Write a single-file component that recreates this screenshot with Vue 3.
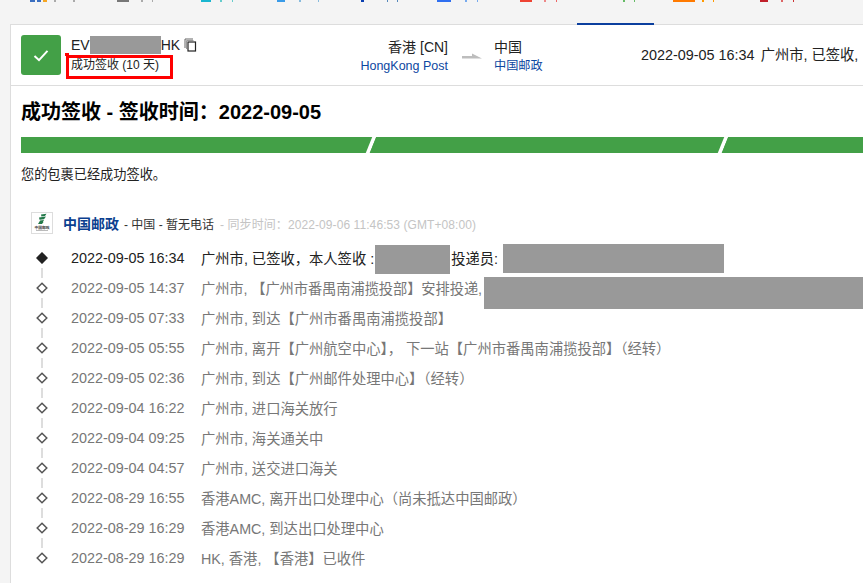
<script setup>
const marks = [
  [30,5,'#3b6fc0'],[37,4,'#3b6fc0'],[43,4,'#f5a623'],[54,2,'#aaa'],[73,2,'#aaa'],[117,12,'#777'],[141,2,'#aaa'],[152,1,'#aaa'],
  [201,10,'#1ab6d0'],[220,2,'#6cc'],[232,1,'#6cc'],[277,8,'#3a9be8'],[299,2,'#8bd'],[318,1,'#8bd'],[361,3,'#0a3fb0'],[387,1,'#58b'],[397,1,'#58b'],
  [437,14,'#2f6ff0'],[465,2,'#7ae'],[477,1,'#7ae'],[520,12,'#ee4433'],[544,2,'#e88'],[556,1,'#e66'],[623,2,'#6b6'],[634,1,'#6b6'],
  [673,22,'#ff7a00'],[702,2,'#f90'],[713,1,'#f90'],[760,8,'#c0202a'],[781,2,'#d66'],[793,1,'#c33']
]
let cursor = 0
const strip = marks.map(([x, w, c]) => {
  const m = { gap: x - cursor, w, c }
  cursor = x + w
  return m
})
const events = [
  ['2022-09-05 14:37', '广州市, 【广州市番禺南浦揽投部】安排投递,', 'long'],
  ['2022-09-05 07:33', '广州市, 到达【广州市番禺南浦揽投部】'],
  ['2022-09-05 05:55', '广州市, 离开【广州航空中心】， 下一站【广州市番禺南浦揽投部】（经转）'],
  ['2022-09-05 02:36', '广州市, 到达【广州邮件处理中心】（经转）'],
  ['2022-09-04 16:22', '广州市, 进口海关放行'],
  ['2022-09-04 09:25', '广州市, 海关通关中'],
  ['2022-09-04 04:57', '广州市, 送交进口海关'],
  ['2022-08-29 16:55', '香港AMC, 离开出口处理中心（尚未抵达中国邮政）'],
  ['2022-08-29 16:29', '香港AMC, 到达出口处理中心'],
  ['2022-08-29 16:29', 'HK, 香港, 【香港】已收件']
]
</script>

<template>
  <div class="page">
    <div class="strip">
      <i v-for="(m, i) in strip" :key="i" class="mark" :style="{ marginLeft: m.gap + 'px', width: m.w + 'px', background: m.c }"></i>
      <b class="active-tab"></b>
    </div>
    <div class="card">
      <header class="head">
        <div class="ok">
          <svg width="16" height="13" viewBox="0 0 16 13"><path d="M1.5 7 L6 11.2 L14.5 1.8" fill="none" stroke="#fff" stroke-width="2"/></svg>
        </div>
        <div class="num">
          <div class="num-line">EV<span class="redact r-num"></span>HK
            <svg class="copy" width="13" height="14" viewBox="0 0 13 14"><path d="M1 10V1h8" fill="none" stroke="#666" stroke-width="1"/><path d="M2.500 11V2.500h7" fill="none" stroke="#999" stroke-width="1"/><rect x="4" y="4" width="7.500" height="9" fill="#fff" stroke="#222" stroke-width="1.200"/></svg>
          </div>
          <div class="num-sub">成功签收 (10 天)<span class="tick"></span></div>
        </div>
        <div class="from">
          <div class="place">香港 [CN]</div>
          <div class="post">HongKong Post</div>
        </div>
        <svg class="arrow" width="20" height="8" viewBox="0 0 20 8"><path d="M0 4h10V1.500L20 6.500H0z" fill="#bdbdbd"/></svg>
        <div class="to">
          <div class="place">中国</div>
          <div class="post">中国邮政</div>
        </div>
        <div class="latest"><span>2022-09-05 16:34</span><span class="latest-desc">广州市, 已签收,</span></div>
      </header>

      <section class="body">
        <h1 class="title">成功签收 - 签收时间：2022-09-05</h1>
        <div class="bar">
          <span class="seg"></span><span class="seg"></span><span class="seg"></span>
        </div>
        <p class="msg">您的包裹已经成功签收。</p>

        <div class="carrier">
          <div class="logo">
            <svg width="20" height="20" viewBox="0 0 20 20">
              <path d="M9 1.500l5.500-.8-1.500 2.300-3.600.5zM7 4.500l7-1-2 2.800-4.500.5zM8 7.500l4-.5-1.200 2.200.8-.2-1.600 2H6l1.400-2.200z" fill="#23794a"/>
              <text x="10" y="15.500" font-size="3.800" font-weight="700" text-anchor="middle" fill="#444" font-family="Noto Sans CJK SC, sans-serif">中国邮政</text>
              <rect x="4" y="17" width="12" height="1" fill="#bbb"/>
            </svg>
          </div>
          <span class="c-name">中国邮政</span>
          <span class="c-meta">- 中国 - 暂无电话</span>
          <span class="c-sync">- 同步时间：2022-09-06 11:46:53 (GMT+08:00)</span>
        </div>

        <ul class="timeline">
          <li class="row first">
            <svg class="dot" width="12" height="12" viewBox="0 0 12 12"><path d="M6 1l5 5-5 5-5-5z" fill="#222" stroke="#222" stroke-width="1.500"/></svg>
            <span class="time">2022-09-05 16:34</span>
            <span class="desc">广州市, 已签收，本人签收 :<span class="redact r-a"></span>投递员:<span class="redact r-b"></span></span>
          </li>
          <li v-for="(e, i) in events" :key="i" class="row">
            <svg class="dot" width="12" height="12" viewBox="0 0 12 12"><path d="M6 1.200L10.800 6 6 10.800 1.200 6z" fill="#fff" stroke="#555" stroke-width="1.500"/></svg>
            <span class="time">{{ e[0] }}</span>
            <span class="desc" :class="{ tight: e[2] }">{{ e[1] }}<span v-if="e[2]" class="redact r-c"></span></span>
          </li>
        </ul>
      </section>
    </div>
  </div>
</template>

<style>
html, body { margin: 0; background: #f4f4f4; }
</style>

<style scoped>
.page {
  width: 863px;
  height: 583px;
  overflow: hidden;
  background: #f4f4f4;
  font-family: "Liberation Sans", "Noto Sans CJK SC", sans-serif;
  color: #222;
  position: relative;
}
.strip { height: 24px; display: flex; align-items: flex-start; position: relative; }
.mark { display: block; height: 2px; flex: none; }
.active-tab { position: absolute; left: 577px; top: 23px; width: 77px; height: 2px; background: #0b3f9e; z-index: 2; }
.card { margin-left: 10px; width: 900px; height: 600px; background: #fff; border: 1px solid #ddd; box-sizing: border-box; }
.head { height: 60px; border-bottom: 1px solid #ddd; display: flex; align-items: flex-start; padding-left: 10px; position: relative; }
.ok { width: 40px; height: 40px; margin-top: 10px; background: #43a047; border-radius: 3px; display: flex; align-items: center; justify-content: center; flex: none; }
.num { margin-left: 10px; width: 120px; flex: none; }
.num-line { margin-top: 10px; height: 20px; font-size: 14px; line-height: 20px; display: flex; align-items: center; white-space: nowrap; }
.redact { display: inline-block; background: #999; flex: none; }
.r-num { width: 71px; height: 18px; }
.copy { margin-left: 4px; flex: none; }
.num-sub { font-size: 12px; line-height: 18px; margin-top: 1px; white-space: nowrap; position: relative; }
.tick { position: absolute; left: -5px; top: -1px; width: 101px; height: 18px; border: 3px solid #f00; pointer-events: none; }
.tick::before { content: ""; position: absolute; left: -4px; top: -5px; width: 4px; height: 3px; background: #f00; }
.from { width: 179px; margin-left: 78px; text-align: right; flex: none; }
.place { font-size: 14px; line-height: 18px; margin-top: 13px; margin-bottom: 1px; }
.post { font-size: 12.500px; line-height: 18px; color: #0d47a1; white-space: nowrap; }
.to .post { font-size: 12.200px; }
.arrow { margin: 27px 12px 0 14px; flex: none; }
.to { width: 147px; flex: none; }
.latest { font-size: 14.400px; line-height: 20px; margin-top: 20px; white-space: nowrap; }
.latest-desc { margin-left: 6px; font-size: 14.300px; }
.body { padding: 0 10px; }
.title { margin: 13px 0 0; font-size: 20px; line-height: 26px; font-weight: 700; color: #000; }
.bar { margin-top: 12px; height: 16px; width: 869px; display: flex; overflow: hidden; background: #43a047; }
.seg { display: block; width: 352px; flex: none; height: 16px; box-sizing: border-box; border-right: 4px solid #fff; transform: skewX(-22deg); background: #43a047; }
.msg { margin: 13px 0 0; font-size: 13.200px; line-height: 18px; color: #222; }
.carrier { margin: 28px 0 0 10px; height: 22px; display: flex; align-items: center; white-space: nowrap; }
.logo { width: 20px; height: 20px; border: 1px solid #ddd; flex: none; margin-right: 10px; display: flex; }
.c-name { font-size: 14px; font-weight: 700; color: #0b3f8f; }
.c-meta { font-size: 12px; color: #333; margin-left: 5px; }
.c-sync { font-size: 12px; letter-spacing: .085px; color: #c4c4c4; margin-left: 6px; }
.timeline { list-style: none; margin: 8px 0 0; padding: 0; }
.row { height: 30px; display: flex; align-items: center; position: relative; white-space: nowrap; font-size: 14.400px; color: #777; }
.row.first { color: #222; }
.row + .row::before { content: ""; position: absolute; left: 20px; top: -4px; width: 2px; height: 10px; background: #ddd; }
.dot { position: absolute; left: 15px; top: 10px; }
.time { margin-left: 50px; width: 130px; flex: none; padding-top: 2px; }
.desc { display: flex; align-items: center; height: 30px; font-size: 14.300px; }
.desc.tight { letter-spacing: -.12px; }
.r-a { width: 75px; height: 29px; margin: 5px 1px 0 1px; }
.r-b { width: 221px; height: 29px; margin: 3px 0 0 5px; }
.r-c { width: 420px; height: 32px; margin: 12px 0 0 2px; }
</style>
